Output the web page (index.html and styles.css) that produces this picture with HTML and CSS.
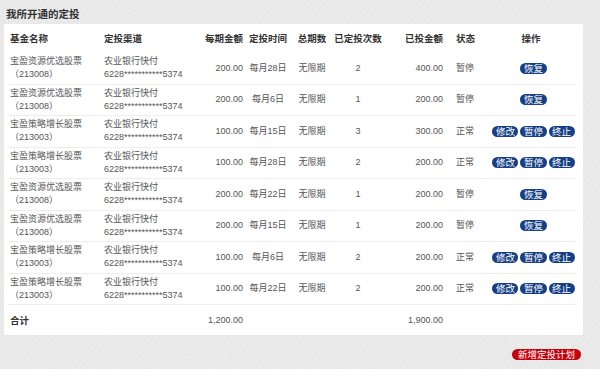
FILE: index.html
```html
<!DOCTYPE html>
<html lang="zh-CN">
<head>
<meta charset="utf-8">
<title>我所开通的定投</title>
<link rel="stylesheet" href="styles.css">
</head>
<body>
<div class="page">
  <h1 class="title">我所开通的定投</h1>
  <div class="panel">
    <div class="row head">
      <div class="c c1">基金名称</div>
      <div class="c c2">定投渠道</div>
      <div class="c c3">每期金额</div>
      <div class="c c4">定投时间</div>
      <div class="c c5">总期数</div>
      <div class="c c6">已定投次数</div>
      <div class="c c7">已投金额</div>
      <div class="c c8">状态</div>
      <div class="c c9">操作</div>
    </div>

    <div class="row">
      <div class="c c1 two"><span>宝盈资源优选股票</span><span>（213008）</span></div>
      <div class="c c2 two"><span>农业银行快付</span><span>6228***********5374</span></div>
      <div class="c c3">200.00</div>
      <div class="c c4">每月28日</div>
      <div class="c c5">无限期</div>
      <div class="c c6">2</div>
      <div class="c c7">400.00</div>
      <div class="c c8">暂停</div>
      <div class="c c9"><span class="btn">恢复</span></div>
    </div>

    <div class="row">
      <div class="c c1 two"><span>宝盈资源优选股票</span><span>（213008）</span></div>
      <div class="c c2 two"><span>农业银行快付</span><span>6228***********5374</span></div>
      <div class="c c3">200.00</div>
      <div class="c c4">每月6日</div>
      <div class="c c5">无限期</div>
      <div class="c c6">1</div>
      <div class="c c7">200.00</div>
      <div class="c c8">暂停</div>
      <div class="c c9"><span class="btn">恢复</span></div>
    </div>

    <div class="row">
      <div class="c c1 two"><span>宝盈策略增长股票</span><span>（213003）</span></div>
      <div class="c c2 two"><span>农业银行快付</span><span>6228***********5374</span></div>
      <div class="c c3">100.00</div>
      <div class="c c4">每月15日</div>
      <div class="c c5">无限期</div>
      <div class="c c6">3</div>
      <div class="c c7">300.00</div>
      <div class="c c8">正常</div>
      <div class="c c9"><span class="btn">修改</span><span class="btn">暂停</span><span class="btn">终止</span></div>
    </div>

    <div class="row">
      <div class="c c1 two"><span>宝盈策略增长股票</span><span>（213003）</span></div>
      <div class="c c2 two"><span>农业银行快付</span><span>6228***********5374</span></div>
      <div class="c c3">100.00</div>
      <div class="c c4">每月28日</div>
      <div class="c c5">无限期</div>
      <div class="c c6">2</div>
      <div class="c c7">200.00</div>
      <div class="c c8">正常</div>
      <div class="c c9"><span class="btn">修改</span><span class="btn">暂停</span><span class="btn">终止</span></div>
    </div>

    <div class="row">
      <div class="c c1 two"><span>宝盈资源优选股票</span><span>（213008）</span></div>
      <div class="c c2 two"><span>农业银行快付</span><span>6228***********5374</span></div>
      <div class="c c3">200.00</div>
      <div class="c c4">每月22日</div>
      <div class="c c5">无限期</div>
      <div class="c c6">1</div>
      <div class="c c7">200.00</div>
      <div class="c c8">暂停</div>
      <div class="c c9"><span class="btn">恢复</span></div>
    </div>

    <div class="row">
      <div class="c c1 two"><span>宝盈资源优选股票</span><span>（213008）</span></div>
      <div class="c c2 two"><span>农业银行快付</span><span>6228***********5374</span></div>
      <div class="c c3">200.00</div>
      <div class="c c4">每月15日</div>
      <div class="c c5">无限期</div>
      <div class="c c6">1</div>
      <div class="c c7">200.00</div>
      <div class="c c8">暂停</div>
      <div class="c c9"><span class="btn">恢复</span></div>
    </div>

    <div class="row">
      <div class="c c1 two"><span>宝盈策略增长股票</span><span>（213003）</span></div>
      <div class="c c2 two"><span>农业银行快付</span><span>6228***********5374</span></div>
      <div class="c c3">100.00</div>
      <div class="c c4">每月6日</div>
      <div class="c c5">无限期</div>
      <div class="c c6">2</div>
      <div class="c c7">200.00</div>
      <div class="c c8">正常</div>
      <div class="c c9"><span class="btn">修改</span><span class="btn">暂停</span><span class="btn">终止</span></div>
    </div>

    <div class="row">
      <div class="c c1 two"><span>宝盈策略增长股票</span><span>（213003）</span></div>
      <div class="c c2 two"><span>农业银行快付</span><span>6228***********5374</span></div>
      <div class="c c3">100.00</div>
      <div class="c c4">每月22日</div>
      <div class="c c5">无限期</div>
      <div class="c c6">2</div>
      <div class="c c7">200.00</div>
      <div class="c c8">正常</div>
      <div class="c c9"><span class="btn">修改</span><span class="btn">暂停</span><span class="btn">终止</span></div>
    </div>

    <div class="row total">
      <div class="c c1 strong">合计</div>
      <div class="c c2"></div>
      <div class="c c3">1,200.00</div>
      <div class="c c4"></div>
      <div class="c c5"></div>
      <div class="c c6"></div>
      <div class="c c7">1,900.00</div>
      <div class="c c8"></div>
      <div class="c c9"></div>
    </div>
  </div>
  <div class="footer">
    <span class="btn-red">新增定投计划</span>
  </div>
</div>
</body>
</html>
```

FILE: styles.css
```css
* { box-sizing: border-box; }

html, body {
  margin: 0;
  padding: 0;
}

body {
  background-color: #e9e9e9;
  background-image:
    repeating-linear-gradient(37deg, rgba(255,255,255,0.12) 0 1px, transparent 1px 4px),
    repeating-linear-gradient(-53deg, rgba(0,0,0,0.012) 0 1px, transparent 1px 5px);
  font-family: "Liberation Sans", "Noto Sans CJK SC", sans-serif;
  color: #555;
  width: 600px;
  height: 369px;
  overflow: hidden;
}

.page {
  width: 600px;
}

.title {
  margin: 0;
  height: 24px;
  padding: 8px 0 0 6px;
  font-size: 10.5px;
  line-height: 13px;
  font-weight: bold;
  color: #333;
}

.panel {
  margin-left: 4px;
  width: 579px;
  height: 311px;
  background: #fff;
  padding: 0 7px 0 4px;
}

.row {
  display: grid;
  grid-template-columns: 94px 88px 56px 44px 44px 48px 64px 44px 86px;
  height: 31.5px;
  border-bottom: 1px solid #eeeeee;
  font-size: 9px;
  align-items: center;
}

.row.head {
  height: 29px;
  border-bottom: none;
  font-size: 9.5px;
  font-weight: bold;
  color: #333;
}

.row.total {
  height: 30px;
  border-bottom: none;
}

.c {
  white-space: nowrap;
  line-height: 13px;
}

.c1 { padding-left: 2px; }
.c2 { padding-left: 2px; }
.c3 { text-align: right; padding-right: 3px; }
.c4 { text-align: center; }
.c5 { text-align: center; }
.c6 { text-align: center; }
.c7 { text-align: right; padding-right: 3px; }
.c8 { padding-left: 10px; }
.c9 {
  display: flex;
  justify-content: center;
  gap: 2px;
  padding-left: 1px;
}

.head .c9 { padding-left: 0; padding-right: 4px; }

.two {
  display: flex;
  flex-direction: column;
}

.strong {
  font-weight: bold;
  color: #333;
  font-size: 9.5px;
}

.btn {
  display: inline-block;
  background: #173f86;
  color: #fff;
  font-size: 9.5px;
  line-height: 11px;
  height: 11px;
  padding: 0 3.5px;
  border-radius: 6px;
}

.footer {
  display: flex;
  justify-content: flex-end;
  padding: 14px 19px 0 0;
}

.btn-red {
  display: inline-block;
  background: #c8000b;
  color: #fff;
  font-size: 9.5px;
  line-height: 11px;
  height: 11px;
  padding: 0 6px;
  border-radius: 6px;
}
```
